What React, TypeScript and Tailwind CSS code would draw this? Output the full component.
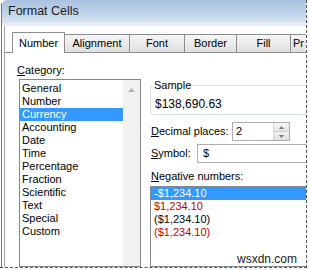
import React from "react";

const categories = [
  "General",
  "Number",
  "Currency",
  "Accounting",
  "Date",
  "Time",
  "Percentage",
  "Fraction",
  "Scientific",
  "Text",
  "Special",
  "Custom",
];

const inactiveTabs = [
  { label: "Alignment", w: "w-[65px]" },
  { label: "Font", w: "w-[55px]" },
  { label: "Border", w: "w-[52px]" },
  { label: "Fill", w: "w-[54px]" },
];

export default function App() {
  return (
    <div className="w-[309px] h-[270px] bg-white overflow-hidden font-['Liberation_Sans',Arial,sans-serif] text-[11px] leading-[13px] text-black">
      <div className="w-[307px] h-[268px] border-r border-b border-dashed border-[#555] overflow-hidden flex">
        <div className="w-[1px] shrink-0" />
        <div className="w-[1px] shrink-0 bg-[#6b7a8c] mt-[3px]" />
        <div className="flex-1 flex flex-col min-w-0">
          {/* title bar */}
          <div className="h-[23px] shrink-0 flex items-center pl-[6px] text-[12.5px] rounded-tl-[5px] bg-gradient-to-b from-[#a9c2e0] via-[#bdd1e9] to-[#d8e4f1] text-[#1b1b1b]">
            Format Cells
          </div>
          <div className="h-[3px] shrink-0 bg-[#e8eef6]" />
          <div className="flex-1 flex min-h-0">
            <div className="w-[2px] shrink-0" />
            <div className="w-[1px] shrink-0 bg-[#9da3aa]" />
            <div className="flex-1 flex flex-col min-w-0 pt-[6px]">
              {/* tabs */}
              <div className="h-[21px] shrink-0 flex items-end overflow-hidden">
                <div className="w-[7px] shrink-0 h-full border-b border-[#8c8e94]" />
                <div className="w-[53px] shrink-0 h-[21px] flex items-center justify-center bg-white border-l border-t border-r border-[#8c8e94]">
                  Number
                </div>
                {inactiveTabs.map((t) => (
                  <div
                    key={t.label}
                    className={`${t.w} shrink-0 h-[19px] flex items-center justify-center border-t border-r border-b border-[#8c8e94] bg-gradient-to-b from-[#f6f6f6] to-[#dfdfdf]`}
                  >
                    {t.label}
                  </div>
                ))}
                <div className="w-[20px] shrink-0 h-[19px] flex items-center pl-[2px] border-t border-b border-[#8c8e94] bg-gradient-to-b from-[#f6f6f6] to-[#dfdfdf] overflow-hidden">
                  Pr
                </div>
              </div>
              {/* panel */}
              <div className="flex-1 flex min-h-0">
                {/* left column */}
                <div className="w-[136px] shrink-0 pl-[12px] pt-[11px] flex flex-col">
                  <div>
                    <span className="underline underline-offset-[1px]">C</span>ategory:
                  </div>
                  <div className="mt-[2px] ml-[2px] w-[122px] flex-1 border border-[#828790] flex">
                    <div className="flex-1 pt-[2px] flex flex-col">
                      {categories.map((c) =>
                        c === "Currency" ? (
                          <div key={c} className="h-[13px] pl-[2px] bg-[#3399ff] text-white">
                            {c}
                          </div>
                        ) : (
                          <div key={c} className="h-[13px] pl-[2px]">
                            {c}
                          </div>
                        )
                      )}
                    </div>
                    <div className="w-[17px] shrink-0 bg-[#f2f2f2] flex justify-center pt-[8px]">
                      <svg width="7" height="4" viewBox="0 0 7 4">
                        <path d="M0 4 L3.5 0 L7 4 Z" fill="#b4b4b4" />
                      </svg>
                    </div>
                  </div>
                </div>
                {/* right column */}
                <div className="flex-1 min-w-0 pl-[9px] pt-[26px] flex flex-col">
                  <fieldset className="w-[170px] border border-[#d5dfe5] rounded-[3px] px-[4px] pt-[6px] pb-[3px]">
                    <legend className="-ml-[2px] px-[1px]">Sample</legend>
                    <div className="text-[12px]">$138,690.63</div>
                  </fieldset>
                  <div className="mt-[7px] h-[19px] flex items-center">
                    <div className="w-[82px] shrink-0 pl-[1px]">
                      <span className="underline underline-offset-[1px]">D</span>ecimal places:
                    </div>
                    <div className="w-[58px] shrink-0 h-[19px] border border-[#abadb3] flex">
                      <div className="flex-1 pl-[3px] flex items-center">2</div>
                      <div className="w-[16px] flex flex-col border-l border-[#d6d6d6]">
                        <div className="flex-1 flex items-center justify-center bg-gradient-to-b from-[#f7f7f7] to-[#e4e4e4] border-b border-[#cfcfcf]">
                          <svg width="5" height="3" viewBox="0 0 5 3">
                            <path d="M0 3 L2.5 0 L5 3 Z" fill="#7a7a7a" />
                          </svg>
                        </div>
                        <div className="flex-1 flex items-center justify-center bg-gradient-to-b from-[#f2f2f2] to-[#e0e0e0]">
                          <svg width="5" height="3" viewBox="0 0 5 3">
                            <path d="M0 0 L2.5 3 L5 0 Z" fill="#7a7a7a" />
                          </svg>
                        </div>
                      </div>
                    </div>
                  </div>
                  <div className="mt-[3px] h-[19px] flex items-center">
                    <div className="w-[47px] shrink-0 pl-[1px]">
                      <span className="underline underline-offset-[1px]">S</span>ymbol:
                    </div>
                    <div className="w-[130px] shrink-0 h-[19px] border border-[#abadb3] pl-[5px] flex items-center">
                      $
                    </div>
                  </div>
                  <div className="mt-[7px] pl-[1px]">
                    <span className="underline underline-offset-[1px]">N</span>egative numbers:
                  </div>
                  <div className="relative mt-[3px] w-[180px] flex-1 border border-[#828790] flex flex-col">
                    <div className="h-[13px] pl-[3px] bg-[#3399ff] text-white">-$1,234.10</div>
                    <div className="h-[13px] pl-[3px] text-[#c00000]">$1,234.10</div>
                    <div className="h-[13px] pl-[3px]">($1,234.10)</div>
                    <div className="h-[13px] pl-[3px] text-[#c00000]">($1,234.10)</div>
                    <div className="absolute left-[86px] top-[65px] text-[12px] leading-[14px] text-[#222]">
                      wsxdn.com
                    </div>
                  </div>
                </div>
              </div>
            </div>
          </div>
        </div>
      </div>
    </div>
  );
}
